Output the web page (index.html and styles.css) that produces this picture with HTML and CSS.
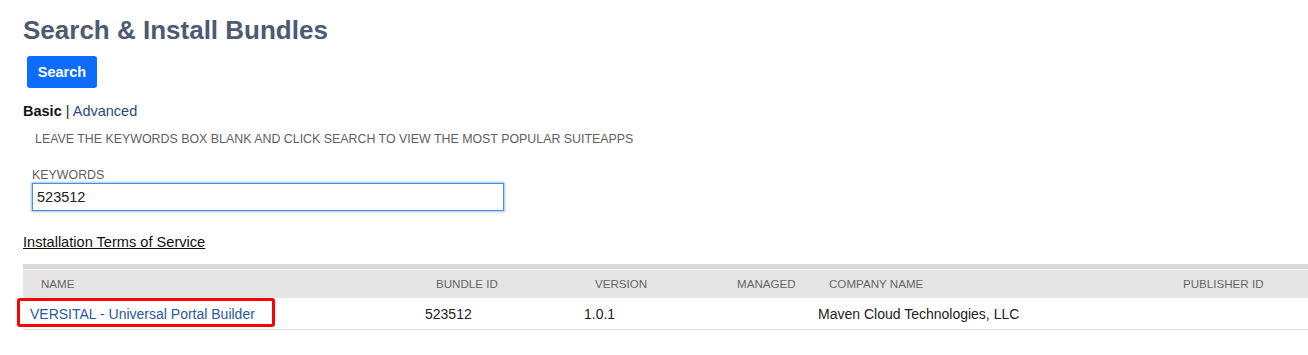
FILE: index.html
```html
<!DOCTYPE html>
<html>
<head>
<meta charset="utf-8">
<link rel="stylesheet" href="styles.css">
</head>
<body>
<div class="page">
  <h1 class="title">Search &amp; Install Bundles</h1>
  <div class="actions"><button class="btn">Search</button></div>
  <div class="tabs"><span class="tab-active">Basic</span> <span class="sep">|</span> <a class="tab-link">Advanced</a></div>
  <p class="hint">LEAVE THE KEYWORDS BOX BLANK AND CLICK SEARCH TO VIEW THE MOST POPULAR SUITEAPPS</p>
  <div class="field">
    <label class="field-label">KEYWORDS</label>
    <input class="field-input" type="text" value="523512">
  </div>
  <a class="terms">Installation Terms of Service</a>
  <table class="results">
    <colgroup>
      <col class="c1"><col class="c2"><col class="c3"><col class="c4"><col class="c5"><col class="c6">
    </colgroup>
    <thead>
      <tr>
        <th>NAME</th><th>BUNDLE ID</th><th>VERSION</th><th>MANAGED</th><th>COMPANY NAME</th><th>PUBLISHER ID</th>
      </tr>
    </thead>
    <tbody>
      <tr>
        <td class="name-cell"><a class="bundle-link">VERSITAL - Universal Portal Builder</a><span class="highlight"></span></td>
        <td>523512</td><td>1.0.1</td><td></td><td>Maven Cloud Technologies, LLC</td><td></td>
      </tr>
    </tbody>
  </table>
</div>
</body>
</html>
```
FILE: styles.css
```css
html, body {
  margin: 0;
  padding: 0;
  background: #fff;
}
body {
  font-family: "Liberation Sans", Arial, sans-serif;
  color: #222;
}
.page {
  padding: 14px 0 0 23px;
}
.title {
  margin: 0;
  font-size: 26px;
  line-height: 32px;
  font-weight: bold;
  color: #4d5a71;
}
.actions {
  margin-top: 10px;
  padding-left: 4px;
}
.btn {
  display: block;
  height: 32px;
  width: 70px;
  padding: 0;
  border: 0;
  border-radius: 3px;
  background: #0c6cfb;
  color: #fff;
  font-family: "Liberation Sans", Arial, sans-serif;
  font-weight: bold;
  font-size: 14.5px;
}
.tabs {
  margin-top: 15px;
  font-size: 14.5px;
  line-height: 16px;
}
.tab-active {
  font-weight: bold;
  color: #111;
}
.sep { color: #222; }
.tab-link {
  color: #2a4a82;
}
.hint {
  margin: 13px 0 0 12px;
  font-size: 12.4px;
  line-height: 14px;
  color: #5f5f5f;
}
.field {
  margin-top: 23px;
  padding-left: 8px;
  display: flex;
  flex-direction: column;
  align-items: flex-start;
}
.field-label {
  font-size: 12.4px;
  line-height: 13px;
  color: #5f5f5f;
  margin-left: 1px;
}
.field-input {
  box-sizing: border-box;
  margin: 1px 0 0 1px;
  width: 472px;
  height: 28px;
  border: 1px solid #4a8fd8;
  box-shadow: 0 0 2px 1px #9cc5f0;
  outline: none;
  padding: 0 4px;
  font-family: "Liberation Sans", Arial, sans-serif;
  font-size: 14.5px;
  color: #222;
}
.terms {
  display: block;
  margin-top: 23px;
  font-size: 14.6px;
  line-height: 16px;
  color: #111;
  text-decoration: underline;
}
.results {
  margin-top: 14px;
  width: 100%;
  border-collapse: collapse;
  table-layout: fixed;
}
.c1 { width: 395px; }
.c2 { width: 159px; }
.c3 { width: 142px; }
.c4 { width: 92px; }
.c5 { width: 354px; }
.c6 { width: auto; }
.results thead tr {
  background: #e5e5e5;
  border-top: 5px solid #d8d8d8;
}
.results th {
  text-align: left;
  font-weight: normal;
  font-size: 11.6px;
  color: #666;
  height: 29px;
  padding: 0 0 0 18px;
  box-shadow: inset 0 1px 0 #efefef;
}
.results td {
  height: 31px;
  padding: 0 0 0 7px;
  font-size: 14px;
  color: #222;
  border-bottom: 1px solid #e4e4e4;
}
.name-cell {
  position: relative;
}
.bundle-link {
  color: #2a5aa0;
}
.highlight {
  position: absolute;
  left: -6px;
  top: 0;
  width: 252px;
  height: 23px;
  border: 3px solid #ff0000;
  border-radius: 3px;
}
```
